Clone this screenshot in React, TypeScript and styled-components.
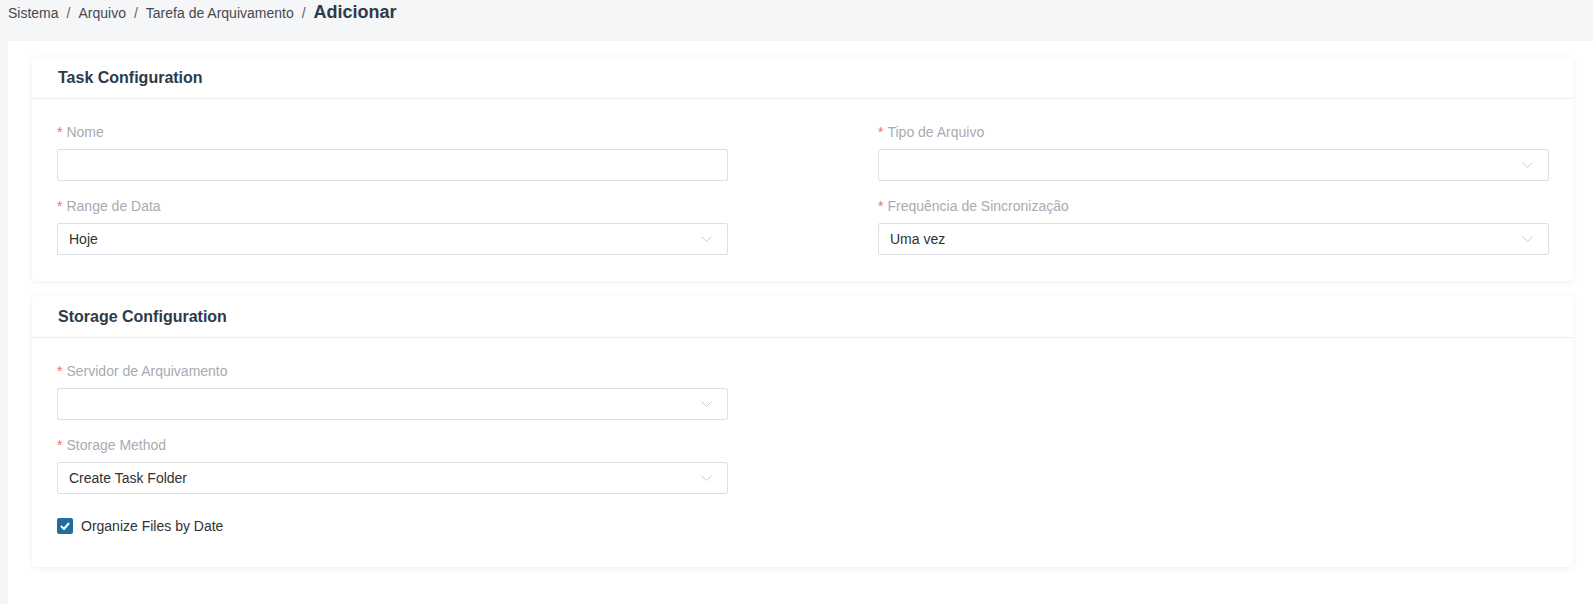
import React from "react";
import styled, { createGlobalStyle } from "styled-components";

const GlobalStyle = createGlobalStyle`
  html, body {
    margin: 0;
    padding: 0;
    background: #f5f6f8;
    font-family: "Liberation Sans", Arial, sans-serif;
    color: #303133;
  }
  * { box-sizing: border-box; }
`;

const Page = styled.div`
  min-height: 604px;
  display: flex;
  flex-direction: column;
`;

const Breadcrumb = styled.nav`
  height: 41px;
  padding: 1px 0 0 8px;
  display: flex;
  align-items: baseline;
  font-size: 14px;
  line-height: 22px;
`;

const Crumb = styled.span<{ $current?: boolean }>`
  color: ${(p) => (p.$current ? "#2f3a48" : "#48494e")};
  font-size: ${(p) => (p.$current ? "18px" : "14px")};
  font-weight: ${(p) => (p.$current ? 700 : 400)};
`;

const Sep = styled.span`
  color: #606266;
  margin: 0 8px;
`;

const Main = styled.main`
  flex: 1;
  margin-left: 8px;
  background: #fff;
  padding: 16px 20px 24px 24px;
  display: flex;
  flex-direction: column;
  gap: 15px;
`;

const Card = styled.section`
  background: #fff;
  border-radius: 4px;
  box-shadow: 0 1px 6px rgba(0, 0, 0, 0.07);
`;

const CardHeader = styled.header`
  height: 42px;
  padding: 0 26px;
  display: flex;
  align-items: center;
  border-bottom: 1px solid #ebeef5;
  font-size: 16px;
  font-weight: 700;
  color: #2c3a4b;
`;

const CardBody = styled.div`
  padding: 22px 24px 26px 25px;
`;

const FormGrid = styled.div<{ $cols: number }>`
  display: grid;
  grid-template-columns: ${(p) => (p.$cols === 2 ? "1fr 1fr" : "671px")};
  column-gap: 150px;
  row-gap: 14px;
`;

const Item = styled.div`
  display: flex;
  flex-direction: column;
  gap: 6px;
`;

const Label = styled.label`
  font-size: 14px;
  line-height: 22px;
  color: #a8abb2;
  &::before {
    content: "*";
    color: #f56c6c;
    margin-right: 4px;
  }
`;

const Field = styled.div`
  height: 32px;
  border: 1px solid #dcdfe6;
  border-radius: 2px;
  padding: 0 12px 0 11px;
  display: flex;
  align-items: center;
  justify-content: space-between;
  font-size: 14px;
  color: #303133;
  background: #fff;
`;

const Chevron = styled.svg`
  width: 11px;
  height: 6px;
  margin-right: 3px;
`;

const CheckRow = styled.label`
  margin-top: 16px;
  height: 31px;
  display: flex;
  align-items: center;
  gap: 8px;
  font-size: 14px;
  color: #303133;
`;

const CheckBox = styled.span`
  width: 16px;
  height: 16px;
  border-radius: 2px;
  background: #1f6e9f;
  display: flex;
  align-items: center;
  justify-content: center;
`;

const Select = ({ value }: { value?: string }) => (
  <Field>
    <span>{value}</span>
    <Chevron viewBox="0 0 11 6" fill="none">
      <path d="M0.5 0.5 L5.5 5.5 L10.5 0.5" stroke="#c8cbd1" strokeWidth="1" />
    </Chevron>
  </Field>
);

const App = () => {
  return (
    <Page>
      <GlobalStyle />
      <Breadcrumb>
        <Crumb>Sistema</Crumb>
        <Sep>/</Sep>
        <Crumb>Arquivo</Crumb>
        <Sep>/</Sep>
        <Crumb>Tarefa de Arquivamento</Crumb>
        <Sep>/</Sep>
        <Crumb $current>Adicionar</Crumb>
      </Breadcrumb>

      <Main>
        <Card>
          <CardHeader>Task Configuration</CardHeader>
          <CardBody>
            <FormGrid $cols={2}>
              <Item>
                <Label>Nome</Label>
                <Field />
              </Item>
              <Item>
                <Label>Tipo de Arquivo</Label>
                <Select />
              </Item>
              <Item>
                <Label>Range de Data</Label>
                <Select value="Hoje" />
              </Item>
              <Item>
                <Label>Frequência de Sincronização</Label>
                <Select value="Uma vez" />
              </Item>
            </FormGrid>
          </CardBody>
        </Card>

        <Card>
          <CardHeader>Storage Configuration</CardHeader>
          <CardBody>
            <FormGrid $cols={1}>
              <Item>
                <Label>Servidor de Arquivamento</Label>
                <Select />
              </Item>
              <Item>
                <Label>Storage Method</Label>
                <Select value="Create Task Folder" />
              </Item>
            </FormGrid>
            <CheckRow>
              <CheckBox>
                <svg width="10" height="8" viewBox="0 0 10 8" fill="none">
                  <path d="M1 4 L4 7 L9 1" stroke="#fff" strokeWidth="2" />
                </svg>
              </CheckBox>
              Organize Files by Date
            </CheckRow>
          </CardBody>
        </Card>
      </Main>
    </Page>
  );
};

export default App;
